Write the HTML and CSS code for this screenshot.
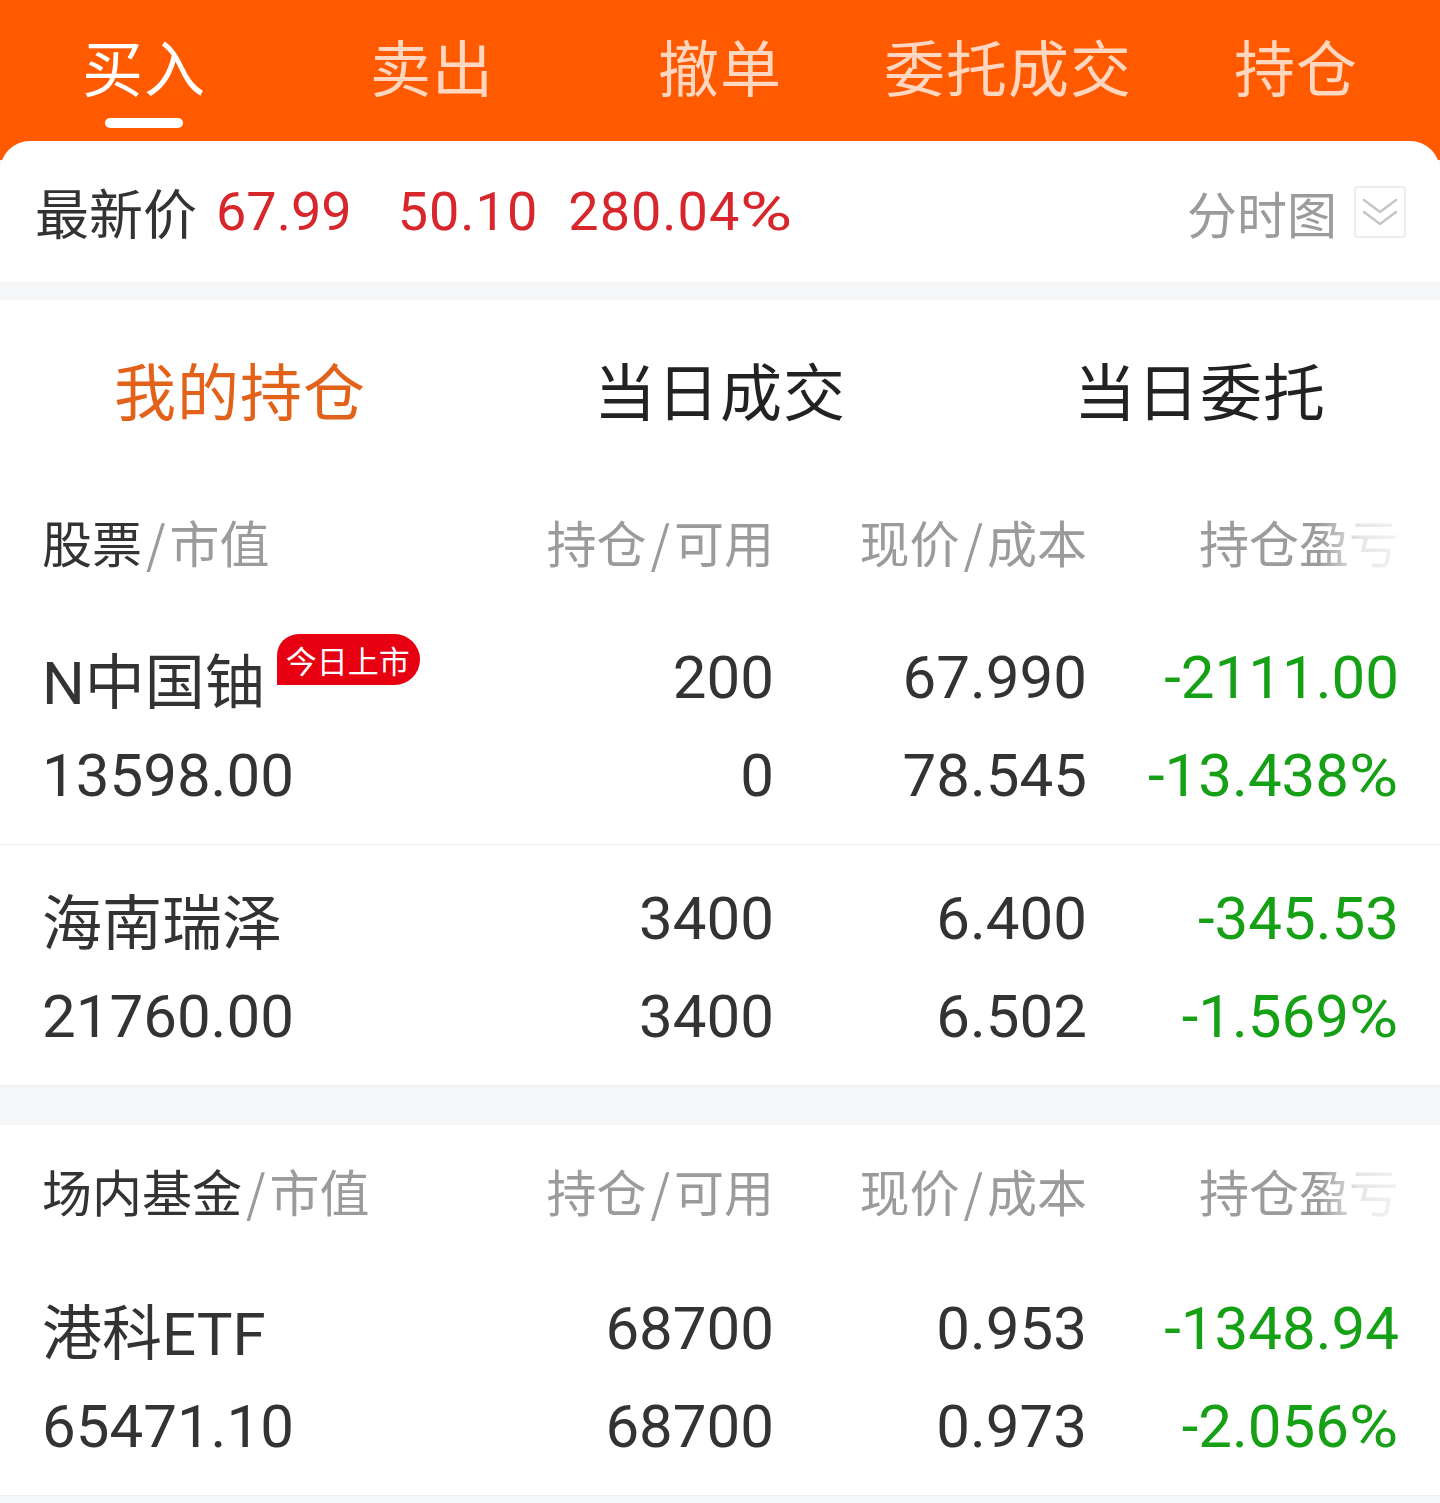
FILE: index.html
```html
<!DOCTYPE html>
<html lang="zh-CN">
<head>
<meta charset="utf-8">
<title>持仓</title>
<link rel="stylesheet" href="styles.css">
</head>
<body>
<div class="page">
  <header class="topbar">
    <nav class="tabs">
      <div class="tab active"><span class="tab-label">买入</span><span class="tab-bar"></span></div>
      <div class="tab"><span class="tab-label">卖出</span></div>
      <div class="tab"><span class="tab-label">撤单</span></div>
      <div class="tab"><span class="tab-label">委托成交</span></div>
      <div class="tab"><span class="tab-label">持仓</span></div>
    </nav>
  </header>

  <main class="card">
    <section class="price-row">
      <div class="price-left">
        <span class="price-label">最新价</span>
        <span class="price-num p1">67.99</span>
        <span class="price-num p2">50.10</span>
        <span class="price-num p3">280.04<span class="pct pct-big">%</span></span>
      </div>
      <div class="price-right">
        <span class="chart-label">分时图</span>
        <span class="chart-btn">
          <svg width="40" height="40" viewBox="0 0 40 40" fill="none" stroke="#c6c6c6" stroke-width="2.4" stroke-linecap="round" stroke-linejoin="round">
            <path d="M4 8 L20 20 L36 8"/>
            <path d="M4 20 L20 32 L36 20"/>
          </svg>
        </span>
      </div>
    </section>

    <div class="band band-small"></div>

    <section class="subtabs">
      <div class="subtab active">我的持仓</div>
      <div class="subtab">当日成交</div>
      <div class="subtab">当日委托</div>
    </section>

    <section class="group">
      <div class="grid head">
        <div class="c1"><span class="dark">股票</span><span class="sl">/</span>市值</div>
        <div class="cr">持仓<span class="sl">/</span>可用</div>
        <div class="cr">现价<span class="sl">/</span>成本</div>
        <div class="cr"><span class="fade">持仓盈亏</span></div>
      </div>

      <div class="grid row">
        <div class="c1 name"><span>N中国铀</span><span class="badge">今日上市</span></div>
        <div class="cr">200</div>
        <div class="cr">67.990</div>
        <div class="cr green">-2111.00</div>
        <div class="c1">13598.00</div>
        <div class="cr">0</div>
        <div class="cr">78.545</div>
        <div class="cr green">-13.438<span class="pct">%</span></div>
      </div>

      <div class="grid row">
        <div class="c1 name"><span>海南瑞泽</span></div>
        <div class="cr">3400</div>
        <div class="cr">6.400</div>
        <div class="cr green">-345.53</div>
        <div class="c1">21760.00</div>
        <div class="cr">3400</div>
        <div class="cr">6.502</div>
        <div class="cr green">-1.569<span class="pct">%</span></div>
      </div>
    </section>

    <div class="band band-large"></div>

    <section class="group">
      <div class="grid head head-fund">
        <div class="c1"><span class="dark">场内基金</span><span class="sl">/</span>市值</div>
        <div class="cr">持仓<span class="sl">/</span>可用</div>
        <div class="cr">现价<span class="sl">/</span>成本</div>
        <div class="cr"><span class="fade">持仓盈亏</span></div>
      </div>

      <div class="grid row">
        <div class="c1 name"><span>港科ETF</span></div>
        <div class="cr">68700</div>
        <div class="cr">0.953</div>
        <div class="cr green">-1348.94</div>
        <div class="c1">65471.10</div>
        <div class="cr">68700</div>
        <div class="cr">0.973</div>
        <div class="cr green">-2.056<span class="pct">%</span></div>
      </div>
    </section>

    <div class="band band-bottom"></div>
  </main>
</div>
</body>
</html>
```

FILE: styles.css
```css
* { box-sizing: border-box; margin: 0; padding: 0; }

html, body {
  background: #ffffff;
}

body {
  font-family: Roboto, "Noto Sans CJK SC", "Noto Sans", sans-serif;
  color: #333333;
  overflow: hidden;
}

.page {
  width: 1440px;
  min-height: 1503px;
  background: #f5f6f8;
}

/* ---------- top orange bar ---------- */
.topbar {
  background: #ff5a00;
  height: 160px;
}

.tabs {
  display: grid;
  grid-template-columns: repeat(5, 1fr);
  height: 141px;
}

.tab {
  display: flex;
  flex-direction: column;
  align-items: center;
  padding-top: 35px;
}

.tab-label {
  font-family: "Noto Sans CJK SC", sans-serif;
  font-size: 61px;
  line-height: 61px;
  color: #ffd6bf;
  letter-spacing: 1px;
}

.tab.active .tab-label {
  color: #ffffff;
}

.tab-bar {
  margin-top: 22px;
  width: 78px;
  height: 10px;
  border-radius: 5px;
  background: #ffffff;
}

/* ---------- card ---------- */
.card {
  margin-top: -19px;
  background: #ffffff;
  border-radius: 30px 30px 0 0;
}

.price-row {
  height: 141px;
  display: flex;
  align-items: center;
  justify-content: space-between;
  padding: 0 34px 0 35px;
}

.price-left {
  display: flex;
  align-items: center;
}

.price-label {
  font-family: "Noto Sans CJK SC", sans-serif;
  font-size: 54px;
  color: #333333;
}

.price-num {
  font-size: 54px;
  color: #d8262d;
}

.pct {
  display: inline-block;
  transform: scaleX(1.12);
  transform-origin: left center;
  margin-right: 5px;
}

.pct-big {
  transform: scaleX(1.32);
  margin-right: 14px;
}

.p1 { margin-left: 19px; }
.p2 { margin-left: 46px; letter-spacing: 1px; }
.p3 { margin-left: 30px; letter-spacing: 1px; }

.price-right {
  display: flex;
  align-items: center;
}

.chart-label {
  font-family: "Noto Sans CJK SC", sans-serif;
  font-size: 50px;
  color: #9b9b9b;
}

.chart-btn {
  margin-left: 17px;
  width: 52px;
  height: 52px;
  border: 2px solid #ececec;
  border-radius: 4px;
  display: flex;
  align-items: center;
  justify-content: center;
}

/* ---------- bands ---------- */
.band { background: #f5f6f8; }
.band-small { height: 18px; }
.band-large { height: 40px; border-top: 1px solid #eeeeee; }
.band-bottom { height: 8px; border-top: 1px solid #eeeeee; }

/* ---------- sub tabs ---------- */
.subtabs {
  display: grid;
  grid-template-columns: repeat(3, 1fr);
  height: 178px;
  align-items: center;
}

.subtab {
  text-align: center;
  font-family: "Noto Sans CJK SC", sans-serif;
  font-size: 62px;
  color: #222222;
  letter-spacing: 1px;
}

.subtab.active {
  color: #e2621a;
}

/* ---------- grid ---------- */
.grid {
  display: grid;
  grid-template-columns: 420px 312px 313px 312px;
  padding: 0 41px 0 42px;
}

.head {
  height: 126px;
  align-items: center;
  font-family: "Noto Sans CJK SC", sans-serif;
  font-size: 50px;
  color: #9b9b9b;
}

.head-fund {
  height: 130px;
}

.head .dark { color: #333333; }

.sl {
  padding: 0 4px;
}

.fade {
  -webkit-mask-image: linear-gradient(to left, rgba(0,0,0,0.12) 0, rgba(0,0,0,0.25) 40px, #000 80px);
  mask-image: linear-gradient(to left, rgba(0,0,0,0.12) 0, rgba(0,0,0,0.25) 40px, #000 80px);
}

.row {
  padding-top: 24px;
  padding-bottom: 20px;
  grid-auto-rows: 98px;
  align-items: center;
  font-size: 60px;
  color: #333333;
}

.row .pct {
  margin-right: 6px;
}

.row + .row {
  border-top: 1px solid #eeeeee;
}

.c1 { text-align: left; }
.cr { text-align: right; }

.name {
  display: flex;
  align-items: center;
  align-self: stretch;
  font-family: Roboto, "Noto Sans CJK SC", sans-serif;
  font-size: 60px;
}

.badge {
  align-self: flex-start;
  margin-top: 6px;
  margin-left: 12px;
  height: 51px;
  padding: 0 10px 0 9px;
  display: flex;
  align-items: center;
  background: #e60012;
  color: #ffffff;
  font-family: "Noto Sans CJK SC", sans-serif;
  font-size: 31px;
  border-radius: 22px 26px 26px 0;
}

.green { color: #16a016; }
```
